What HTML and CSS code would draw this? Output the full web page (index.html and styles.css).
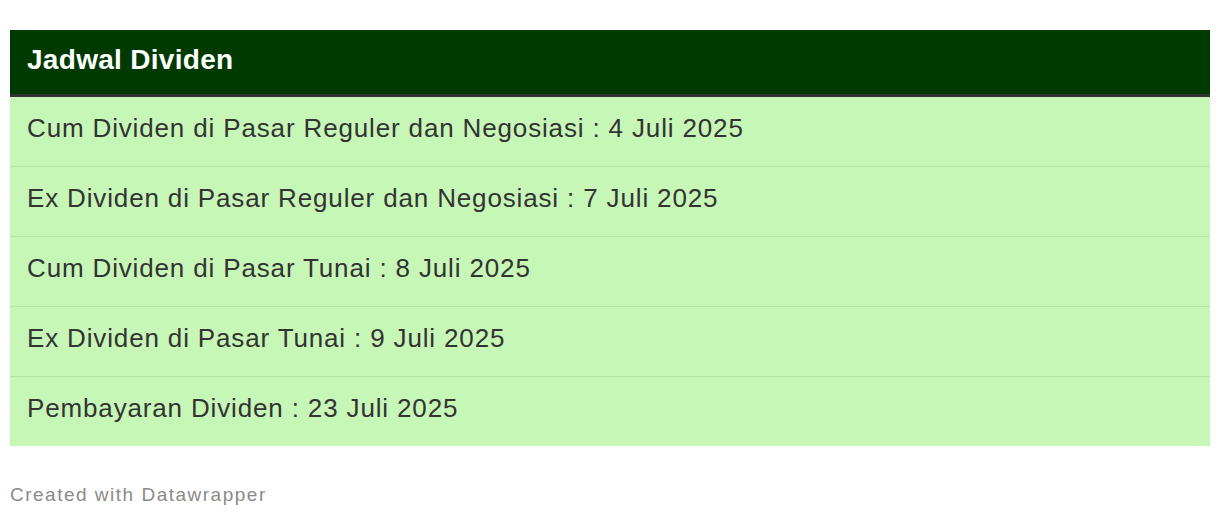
FILE: index.html
```html
<!DOCTYPE html>
<html>
<head>
<meta charset="utf-8">
<link rel="stylesheet" href="styles.css">
</head>
<body>
<div class="wrap">
  <div class="table">
    <div class="head">Jadwal Dividen</div>
    <div class="row">Cum Dividen di Pasar Reguler dan Negosiasi : 4 Juli 2025</div>
    <div class="row">Ex Dividen di Pasar Reguler dan Negosiasi : 7 Juli 2025</div>
    <div class="row">Cum Dividen di Pasar Tunai : 8 Juli 2025</div>
    <div class="row">Ex Dividen di Pasar Tunai : 9 Juli 2025</div>
    <div class="row">Pembayaran Dividen : 23 Juli 2025</div>
  </div>
  <div class="footer">Created with Datawrapper</div>
</div>
</body>
</html>
```
FILE: styles.css
```css
html, body { margin: 0; padding: 0; background: #fff; }
body { font-family: "Liberation Sans", Arial, Helvetica, sans-serif; }
.wrap { padding: 30px 10px 0 10px; }
.table { display: flex; flex-direction: column; }
.head {
  box-sizing: border-box;
  height: 67px;
  background: #003a00;
  border-bottom: 3px solid #333;
  color: #fff;
  font-weight: bold;
  font-size: 28px;
  letter-spacing: 0.3px;
  display: flex;
  align-items: center;
  padding: 0 0 5px 17px;
}
.row {
  box-sizing: border-box;
  height: 70px;
  background: #c6f7b7;
  color: #333;
  font-size: 26px;
  letter-spacing: 0.85px;
  display: flex;
  align-items: center;
  padding: 0 0 6px 17px;
  border-bottom: 1px solid #b3e2a5;
}
.row:last-child { height: 69px; border-bottom: none; }
.footer {
  margin-top: 38px;
  color: #8a8a8a;
  font-size: 19px;
  letter-spacing: 1.5px;
}
```
